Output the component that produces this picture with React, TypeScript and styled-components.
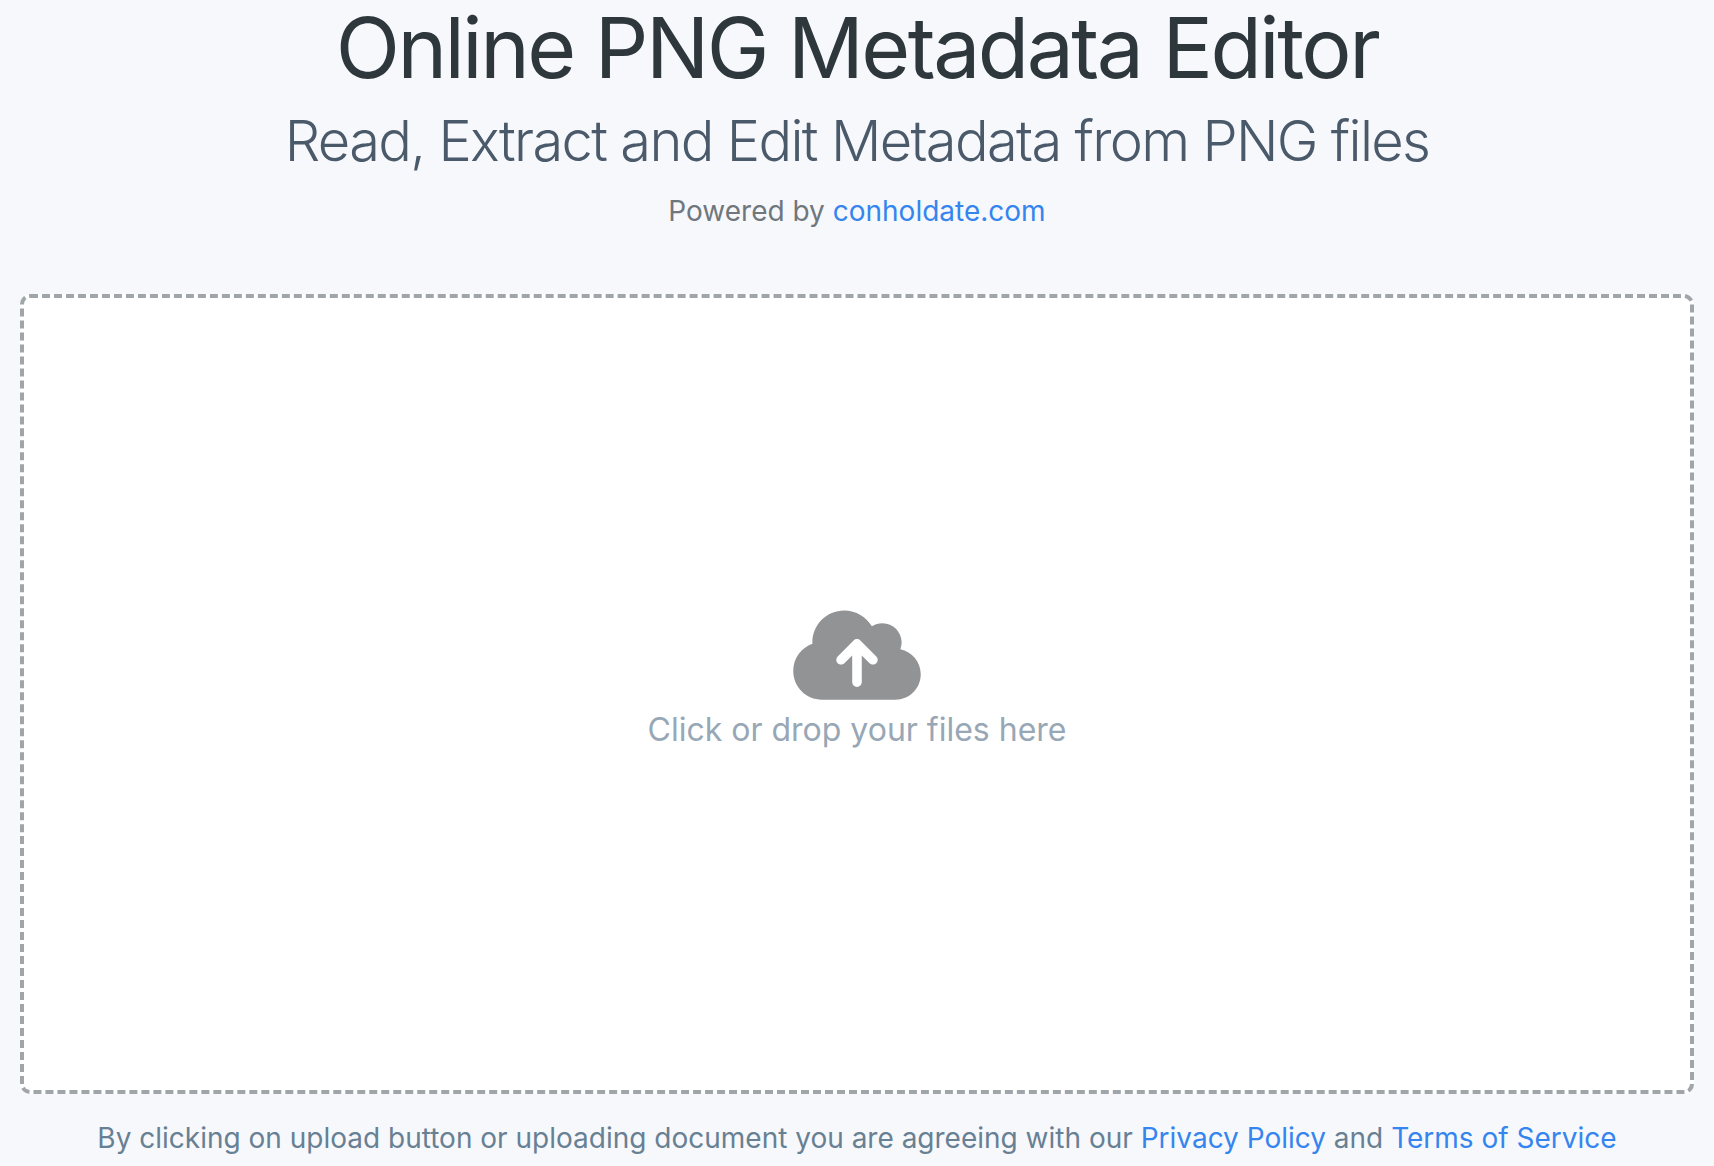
import React from 'react';
import styled, { createGlobalStyle } from 'styled-components';
import { FaCloudArrowUp } from 'react-icons/fa6';

const GlobalStyle = createGlobalStyle`
  * { box-sizing: border-box; }
  body {
    margin: 0;
    background: #f7f8fc;
    font-family: Inter, "Liberation Sans", sans-serif;
  }
`;

const Page = styled.main`
  display: flex;
  flex-direction: column;
  padding: 0 20px 4px;
  text-align: center;
`;

const Title = styled.h1`
  margin: 0;
  font-size: 84px;
  line-height: 96px;
  font-weight: 400;
  letter-spacing: -0.03em;
  color: #2d373c;
`;

const Subtitle = styled.h2`
  margin: 0;
  font-size: 56px;
  line-height: 90px;
  font-weight: 300;
  letter-spacing: -0.03em;
  color: #4b5a6a;
`;

const Powered = styled.p`
  margin: 4px 0 62px;
  font-size: 28px;
  line-height: 42px;
  color: #6f777d;
`;

const Link = styled.a`
  color: #3585ee;
  text-decoration: none;
`;

const DropZone = styled.label`
  position: relative;
  display: flex;
  flex-direction: column;
  align-items: center;
  justify-content: center;
  min-height: 800px;
  padding-bottom: 30px;
  background: #fff;
  border: 4px dashed #a0a5a9;
  border-radius: 10px;
  cursor: pointer;
`;

const FileInput = styled.input`
  position: absolute;
  inset: 0;
  width: 100%;
  opacity: 0;
  cursor: pointer;
`;

const CloudIcon = styled(FaCloudArrowUp)`
  width: 128px;
  height: 102px;
  color: #929395;
`;

const Prompt = styled.span`
  font-size: 32px;
  line-height: 48px;
  color: #98a7b6;
`;

const Agreement = styled.p`
  margin: 20px 0 0;
  font-size: 28px;
  line-height: 48px;
  color: #688093;
`;

export default function App() {
  return (
    <>
      <GlobalStyle />
      <Page>
        <Title>Online PNG Metadata Editor</Title>
        <Subtitle>Read, Extract and Edit Metadata from PNG files</Subtitle>
        <Powered>
          Powered by <Link href="#conholdate">conholdate.com</Link>
        </Powered>
        <DropZone>
          <FileInput type="file" accept="image/png" multiple />
          <CloudIcon aria-hidden="true" />
          <Prompt>Click or drop your files here</Prompt>
        </DropZone>
        <Agreement>
          By clicking on upload button or uploading document you are agreeing with our{' '}
          <Link href="#privacy">Privacy Policy</Link> and <Link href="#terms">Terms of Service</Link>
        </Agreement>
      </Page>
    </>
  );
}
